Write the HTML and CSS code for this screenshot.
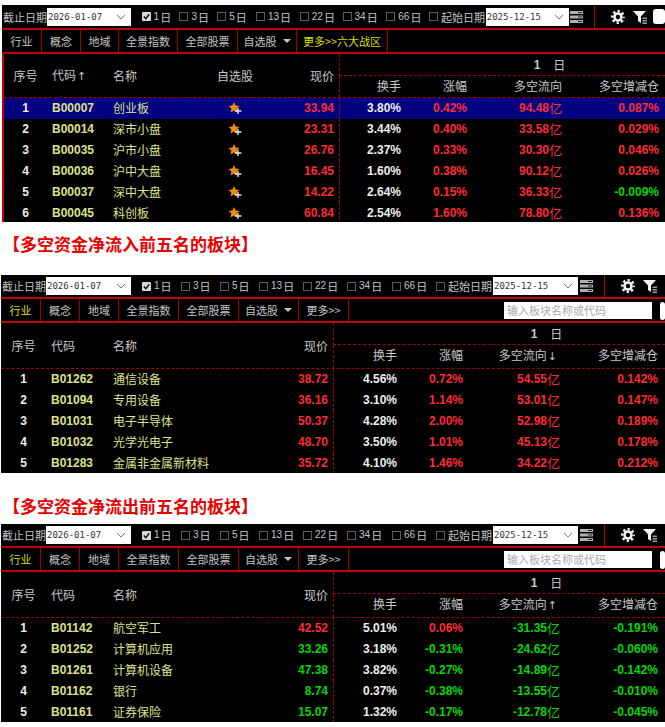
FILE: index.html
```html
<!DOCTYPE html>
<html lang="zh">
<head>
<meta charset="utf-8">
<title>多空资金</title>
<link rel="stylesheet" href="styles.css">
</head>
<body>
<svg class="defs" width="0" height="0" aria-hidden="true">
  <symbol id="star" viewBox="0 0 14 12">
    <path d="M6 0 7.600 3.500 11.600 3.900 8.600 6.500 9.500 10.400 6 8.400 2.500 10.400 3.400 6.500 0.400 3.900 4.400 3.500Z" fill="#f08a12"/>
    <path d="M9.300 6h1.400v2.300h2.700v1.400h-2.700V12H9.300V9.700H6.800V8.300h2.500Z" fill="#ece4d8"/>
  </symbol>
  <symbol id="gear" viewBox="0 0 14 14">
    <circle cx="7" cy="7" r="3.500" fill="none" stroke="#f2f2f2" stroke-width="2.600"/>
    <circle cx="7" cy="7" r="5.800" fill="none" stroke="#f2f2f2" stroke-width="2.400" stroke-dasharray="2.300 2.250" stroke-dashoffset="1.150"/>
  </symbol>
  <symbol id="filter" viewBox="0 0 14 14">
    <path d="M0 1h13L8 6.500V13L5 11V6.500Z" fill="#f2f2f2"/>
    <path d="M9.500 7.500H14V9H9.500ZM9.500 10H14v1.500H9.500ZM9.500 12.500H14V14H9.500Z" fill="#9a9a9a"/>
  </symbol>
  <symbol id="stack" viewBox="0 0 13 12">
    <path d="M0 0h13v3H0ZM0 4.500h13v3H0ZM0 9h13v3H0Z" fill="#b0b0b0"/>
    <path d="M8 1h4v1H8ZM8 5.500h4v1H8ZM8 10h4v1H8Z" fill="#222"/>
  </symbol>
  <symbol id="chev" viewBox="0 0 10 6">
    <path d="M1 1 5 5 9 1" fill="none" stroke="#777" stroke-width="1"/>
  </symbol>
  <symbol id="tick" viewBox="0 0 9 9">
    <rect width="9" height="9" rx="1" fill="#d8d8d8"/>
    <path d="M1.800 4.500 3.800 6.600 7.300 2.300" fill="none" stroke="#111" stroke-width="1.500"/>
  </symbol>
</svg>

<section class="panel panel-a">
  <div class="toolbar">
    <span class="tool-label">截止日期</span>
    <span class="date">2026-01-07<svg class="chev"><use href="#chev"/></svg></span>
    <span class="chk"><svg class="tick"><use href="#tick"/></svg><b>1</b>日</span>
    <span class="chk"><i class="box"></i><b>3</b>日</span>
    <span class="chk"><i class="box"></i><b>5</b>日</span>
    <span class="chk"><i class="box"></i><b>13</b>日</span>
    <span class="chk"><i class="box"></i><b>22</b>日</span>
    <span class="chk"><i class="box"></i><b>34</b>日</span>
    <span class="chk"><i class="box"></i><b>66</b>日</span>
    <span class="chk"><i class="box"></i>起始日期</span>
    <span class="date">2025-12-15<svg class="chev"><use href="#chev"/></svg></span>
    <span class="stack-cell"><svg class="stack"><use href="#stack"/></svg></span>
    <svg class="gear"><use href="#gear"/></svg>
    <svg class="filter"><use href="#filter"/></svg>
    <span class="white-btn"></span>
  </div>
  <div class="tabs">
    <span class="tab">行业</span>
    <span class="tab">概念</span>
    <span class="tab">地域</span>
    <span class="tab">全景指数</span>
    <span class="tab">全部股票</span>
    <span class="tab">自选股<i class="caret"></i></span>
    <span class="tab tab-on">更多&gt;&gt;六大战区</span>
  </div>
  <div class="table">
    <div class="head">
      <span class="h-no">序号</span>
      <span class="h-code">代码<em class="arrow">↑</em></span>
      <span class="h-name">名称</span>
      <span class="h-fav">自选股</span>
      <span class="h-price">现价</span>
      <span class="h-span"><b>1</b><span>日</span></span>
      <span class="h-turn">换手</span>
      <span class="h-chg">涨幅</span>
      <span class="h-flow">多空流向</span>
      <span class="h-pos">多空增减仓</span>
    </div>
    <div class="row row-sel"><span class="no">1</span><span class="code">B00007</span><span class="name">创业板</span><span class="fav"><svg class="star"><use href="#star"/></svg></span><span class="price up">33.94</span><span class="turn">3.80%</span><span class="chg up">0.42%</span><span class="flow up">94.48<i>亿</i></span><span class="pos up">0.087%</span></div>
    <div class="row"><span class="no">2</span><span class="code">B00014</span><span class="name">深市小盘</span><span class="fav"><svg class="star"><use href="#star"/></svg></span><span class="price up">23.31</span><span class="turn">3.44%</span><span class="chg up">0.40%</span><span class="flow up">33.58<i>亿</i></span><span class="pos up">0.029%</span></div>
    <div class="row"><span class="no">3</span><span class="code">B00035</span><span class="name">沪市小盘</span><span class="fav"><svg class="star"><use href="#star"/></svg></span><span class="price up">26.76</span><span class="turn">2.37%</span><span class="chg up">0.33%</span><span class="flow up">30.30<i>亿</i></span><span class="pos up">0.046%</span></div>
    <div class="row"><span class="no">4</span><span class="code">B00036</span><span class="name">沪中大盘</span><span class="fav"><svg class="star"><use href="#star"/></svg></span><span class="price up">16.45</span><span class="turn">1.60%</span><span class="chg up">0.38%</span><span class="flow up">90.12<i>亿</i></span><span class="pos up">0.026%</span></div>
    <div class="row"><span class="no">5</span><span class="code">B00037</span><span class="name">深中大盘</span><span class="fav"><svg class="star"><use href="#star"/></svg></span><span class="price up">14.22</span><span class="turn">2.64%</span><span class="chg up">0.15%</span><span class="flow up">36.33<i>亿</i></span><span class="pos down">-0.009%</span></div>
    <div class="row"><span class="no">6</span><span class="code">B00045</span><span class="name">科创板</span><span class="fav"><svg class="star"><use href="#star"/></svg></span><span class="price up">60.84</span><span class="turn">2.54%</span><span class="chg up">1.60%</span><span class="flow up">78.80<i>亿</i></span><span class="pos up">0.136%</span></div>
  </div>
</section>

<h2 class="title title-a">【多空资金净流入前五名的板块】</h2>

<section class="panel panel-b">
  <div class="toolbar">
    <span class="tool-label">截止日期</span>
    <span class="date">2026-01-07<svg class="chev"><use href="#chev"/></svg></span>
    <span class="chk"><svg class="tick"><use href="#tick"/></svg><b>1</b>日</span>
    <span class="chk"><i class="box"></i><b>3</b>日</span>
    <span class="chk"><i class="box"></i><b>5</b>日</span>
    <span class="chk"><i class="box"></i><b>13</b>日</span>
    <span class="chk"><i class="box"></i><b>22</b>日</span>
    <span class="chk"><i class="box"></i><b>34</b>日</span>
    <span class="chk"><i class="box"></i><b>66</b>日</span>
    <span class="chk"><i class="box"></i>起始日期</span>
    <span class="date">2025-12-15<svg class="chev"><use href="#chev"/></svg></span>
    <span class="stack-cell"><svg class="stack"><use href="#stack"/></svg></span>
    <svg class="gear"><use href="#gear"/></svg>
    <svg class="filter"><use href="#filter"/></svg>
  </div>
  <div class="tabs">
    <span class="tab tab-on">行业</span>
    <span class="tab">概念</span>
    <span class="tab">地域</span>
    <span class="tab">全景指数</span>
    <span class="tab">全部股票</span>
    <span class="tab">自选股<i class="caret"></i></span>
    <span class="tab">更多&gt;&gt;</span>
    <span class="tab-fill"></span>
    <span class="search">输入板块名称或代码</span>
    <span class="tab-fill"></span>
    <span class="white-btn"></span>
  </div>
  <div class="table">
    <div class="head">
      <span class="h-no">序号</span>
      <span class="h-code">代码</span>
      <span class="h-name">名称</span>
      <span class="h-price">现价</span>
      <span class="h-span"><b>1</b><span>日</span></span>
      <span class="h-turn">换手</span>
      <span class="h-chg">涨幅</span>
      <span class="h-flow">多空流向<em class="arrow">↓</em></span>
      <span class="h-pos">多空增减仓</span>
    </div>
    <div class="row"><span class="no">1</span><span class="code">B01262</span><span class="name">通信设备</span><span class="price up">38.72</span><span class="turn">4.56%</span><span class="chg up">0.72%</span><span class="flow up">54.55<i>亿</i></span><span class="pos up">0.142%</span></div>
    <div class="row"><span class="no">2</span><span class="code">B01094</span><span class="name">专用设备</span><span class="price up">36.16</span><span class="turn">3.10%</span><span class="chg up">1.14%</span><span class="flow up">53.01<i>亿</i></span><span class="pos up">0.147%</span></div>
    <div class="row"><span class="no">3</span><span class="code">B01031</span><span class="name">电子半导体</span><span class="price up">50.37</span><span class="turn">4.28%</span><span class="chg up">2.00%</span><span class="flow up">52.98<i>亿</i></span><span class="pos up">0.189%</span></div>
    <div class="row"><span class="no">4</span><span class="code">B01032</span><span class="name">光学光电子</span><span class="price up">48.70</span><span class="turn">3.50%</span><span class="chg up">1.01%</span><span class="flow up">45.13<i>亿</i></span><span class="pos up">0.178%</span></div>
    <div class="row"><span class="no">5</span><span class="code">B01283</span><span class="name">金属非金属新材料</span><span class="price up">35.72</span><span class="turn">4.10%</span><span class="chg up">1.46%</span><span class="flow up">34.22<i>亿</i></span><span class="pos up">0.212%</span></div>
  </div>
</section>

<h2 class="title title-b">【多空资金净流出前五名的板块】</h2>

<section class="panel panel-b">
  <div class="toolbar">
    <span class="tool-label">截止日期</span>
    <span class="date">2026-01-07<svg class="chev"><use href="#chev"/></svg></span>
    <span class="chk"><svg class="tick"><use href="#tick"/></svg><b>1</b>日</span>
    <span class="chk"><i class="box"></i><b>3</b>日</span>
    <span class="chk"><i class="box"></i><b>5</b>日</span>
    <span class="chk"><i class="box"></i><b>13</b>日</span>
    <span class="chk"><i class="box"></i><b>22</b>日</span>
    <span class="chk"><i class="box"></i><b>34</b>日</span>
    <span class="chk"><i class="box"></i><b>66</b>日</span>
    <span class="chk"><i class="box"></i>起始日期</span>
    <span class="date">2025-12-15<svg class="chev"><use href="#chev"/></svg></span>
    <span class="stack-cell"><svg class="stack"><use href="#stack"/></svg></span>
    <svg class="gear"><use href="#gear"/></svg>
    <svg class="filter"><use href="#filter"/></svg>
  </div>
  <div class="tabs">
    <span class="tab tab-on">行业</span>
    <span class="tab">概念</span>
    <span class="tab">地域</span>
    <span class="tab">全景指数</span>
    <span class="tab">全部股票</span>
    <span class="tab">自选股<i class="caret"></i></span>
    <span class="tab">更多&gt;&gt;</span>
    <span class="tab-fill"></span>
    <span class="search">输入板块名称或代码</span>
    <span class="tab-fill"></span>
    <span class="white-btn"></span>
  </div>
  <div class="table">
    <div class="head">
      <span class="h-no">序号</span>
      <span class="h-code">代码</span>
      <span class="h-name">名称</span>
      <span class="h-price">现价</span>
      <span class="h-span"><b>1</b><span>日</span></span>
      <span class="h-turn">换手</span>
      <span class="h-chg">涨幅</span>
      <span class="h-flow">多空流向<em class="arrow">↑</em></span>
      <span class="h-pos">多空增减仓</span>
    </div>
    <div class="row"><span class="no">1</span><span class="code">B01142</span><span class="name">航空军工</span><span class="price up">42.52</span><span class="turn">5.01%</span><span class="chg up">0.06%</span><span class="flow down">-31.35<i>亿</i></span><span class="pos down">-0.191%</span></div>
    <div class="row"><span class="no">2</span><span class="code">B01252</span><span class="name">计算机应用</span><span class="price down">33.26</span><span class="turn">3.18%</span><span class="chg down">-0.31%</span><span class="flow down">-24.62<i>亿</i></span><span class="pos down">-0.060%</span></div>
    <div class="row"><span class="no">3</span><span class="code">B01261</span><span class="name">计算机设备</span><span class="price down">47.38</span><span class="turn">3.82%</span><span class="chg down">-0.27%</span><span class="flow down">-14.89<i>亿</i></span><span class="pos down">-0.142%</span></div>
    <div class="row"><span class="no">4</span><span class="code">B01162</span><span class="name">银行</span><span class="price down">8.74</span><span class="turn">0.37%</span><span class="chg down">-0.38%</span><span class="flow down">-13.55<i>亿</i></span><span class="pos down">-0.010%</span></div>
    <div class="row"><span class="no">5</span><span class="code">B01161</span><span class="name">证券保险</span><span class="price down">15.07</span><span class="turn">1.32%</span><span class="chg down">-0.17%</span><span class="flow down">-12.78<i>亿</i></span><span class="pos down">-0.045%</span></div>
  </div>
</section>
</body>
</html>
```
FILE: styles.css
```css
* { box-sizing: border-box; }
html, body { margin: 0; padding: 0; background: #fff; }
body {
  width: 665px;
  height: 727px;
  overflow: hidden;
  padding-top: 5px;
  font-family: "Noto Sans CJK SC", "Liberation Sans", sans-serif;
  font-size: 12px;
  color: #c8c8c8;
}
.defs { position: absolute; }
.panel { background: #000; overflow: hidden; }
.panel-a {
  margin-left: 2px;
  height: 217px;
  --cols: 43px 66px 97px 50px 79px 62px 66px 95px 97px 1fr;
  --tabs: 40px 39px 38px 59px 60px 59px 91px;
}
.panel-b {
  margin-left: 1px;
  height: 198px;
  --cols: 45px 67px 157px 63px 64px 66px 97px 98px 1fr;
  --tabs: 40px 39px 39px 60px 60px 60px 50px 155px 148px 8px 1fr;
}

/* toolbar */
.toolbar {
  display: flex;
  align-items: center;
  height: 24px;
  border-bottom: 2px solid #c00000;
  font-size: 11px;
  line-height: 14px;
  color: #c4c4c4;
}
.panel-a .toolbar { height: 25px; }
.tool-label { width: 45px; padding-left: 1px; white-space: nowrap; }
.date {
  width: 84px;
  height: 18px;
  display: flex;
  align-items: center;
  justify-content: space-between;
  padding: 0 5px 0 1px;
  background: #fff;
  color: #333;
  font-family: "DejaVu Sans Mono", monospace;
  font-size: 9px;
}
.panel-b .date { width: 85px; }
.toolbar .date:nth-child(2) { margin-right: 11px; }
.chev { width: 10px; height: 6px; }
.chk { display: flex; align-items: center; white-space: nowrap; width: 38px; }
.chk b { font-family: "Liberation Sans", sans-serif; font-weight: 400; font-size: 10px; margin-right: 1px; }
.box { width: 9px; height: 9px; border: 1px solid #5c5c5c; margin-right: 3px; flex: none; }
.tick { width: 9px; height: 9px; margin-right: 3px; flex: none; }
.chk:nth-child(5) { width: 39px; }
.chk:nth-child(6) { width: 44px; }
.chk:nth-child(7) { width: 43px; }
.chk:nth-child(8) { width: 44px; }
.chk:nth-child(9) { width: 43px; }
.chk:nth-child(10) { width: 57px; }
.panel-b .chk { width: 39px; }
.panel-b .chk:nth-child(6) { width: 44px; }
.panel-b .chk:nth-child(7) { width: 44px; }
.panel-b .chk:nth-child(8) { width: 45px; }
.panel-b .chk:nth-child(9) { width: 44px; }
.panel-b .chk:nth-child(10) { width: 57px; }
.stack-cell {
  width: 26px;
  height: 100%;
  display: flex;
  align-items: center;
  padding-left: 1px;
  border-right: 1px solid #c00000;
}
.panel-b .stack-cell { width: 27px; padding-left: 2px; }
.stack { width: 13px; height: 12px; }
.gear { width: 14px; height: 14px; margin-left: 16px; }
.filter { width: 14px; height: 14px; margin-left: 8px; }
.white-btn { display: block; background: #fff; border-radius: 3px; }
.toolbar .white-btn { width: 12px; height: 15px; margin-left: 6px; }

/* tabs */
.tabs {
  display: grid;
  grid-template-columns: var(--tabs);
  height: 24px;
  border-bottom: 2px solid #c00000;
  font-size: 11px;
  line-height: 22px;
  align-items: stretch;
}
.tab {
  display: flex;
  align-items: center;
  justify-content: center;
  white-space: nowrap;
  color: #c4c4c4;
  border-right: 1px solid #a00000;
}
.tab-on { color: #dcdc00; }
.caret {
  width: 0;
  height: 0;
  margin-left: 6px;
  border-left: 4px solid transparent;
  border-right: 4px solid transparent;
  border-top: 4px solid #c4c4c4;
}
.tab-fill { display: block; }
.search {
  margin: 3px 0 1px;
  height: 17px;
  line-height: 17px;
  padding-left: 3px;
  background: #fff;
  color: #aaa;
  font-size: 11px;
  white-space: nowrap;
}
.tabs .white-btn { margin: 3px 0 1px; }

/* table */
.panel-a .table { border-left: 2px solid #c00000; }
.head {
  display: grid;
  grid-template-columns: var(--cols);
  grid-template-rows: 22px 21px;
  border-bottom: 1px dashed #a00000;
  line-height: 20px;
}
.panel-b .head { grid-template-rows: 22px 23px; }
.head > span { white-space: nowrap; }
.h-no, .h-code, .h-name, .h-fav, .h-price {
  grid-row: 1 / span 2;
  align-self: center;
}
.h-no { text-align: center; }
.h-code { padding-left: 5px; }
.h-fav { text-align: center; }
.h-price { text-align: right; padding-right: 5px; }
.panel-a .h-price { grid-column: 5; }
.panel-b .h-price { grid-column: 4; }
.h-span {
  grid-column: 6 / -1;
  display: flex;
  justify-content: center;
  align-items: center;
  gap: 13px;
  padding-left: 94px;
  border-left: 1px dashed #a00000;
  border-bottom: 1px dashed #a00000;
}
.panel-b .h-span { grid-column: 5 / -1; }
.h-span b { font-family: "Liberation Sans", sans-serif; font-size: 12px; }
.h-turn { border-left: 1px dashed #a00000; }
.h-turn, .h-chg, .h-flow, .h-pos { text-align: right; align-self: stretch; }
.panel-b .h-flow { padding-right: 3px; }
.arrow { font-family: "DejaVu Sans", sans-serif; font-style: normal; font-size: 11px; margin-left: 1px; }

.row {
  display: grid;
  grid-template-columns: var(--cols);
  height: 21px;
  line-height: 21px;
  font-family: "Liberation Sans", "Noto Sans CJK SC", sans-serif;
  font-size: 12px;
  font-weight: 700;
  white-space: nowrap;
}
.row-sel { background: #000080; }
.no { text-align: center; color: #eee; }
.code { padding-left: 5px; color: #dfe08a; }
.name { font-family: "Noto Sans CJK SC", sans-serif; font-weight: 400; line-height: 19px; color: #dfe08a; }
.fav { display: flex; align-items: center; justify-content: center; }
.star { width: 14px; height: 12px; margin-bottom: 1px; }
.price { text-align: right; padding-right: 5px; }
.turn { text-align: right; color: #eee; border-left: 1px dashed #a00000; }
.chg, .pos { text-align: right; }
.flow { display: flex; justify-content: flex-end; }
.flow i { font-family: "Noto Sans CJK SC", sans-serif; font-style: normal; font-weight: 400; font-size: 13px; line-height: 19px; }
.up { color: #ff2a35; }
.down { color: #00d800; }

/* section titles */
.title {
  margin: 0;
  color: #e80000;
  font-size: 17px;
  font-weight: 700;
  white-space: nowrap;
  display: flex;
  align-items: center;
  padding-left: 3px;
}
.title-a { height: 53px; padding-bottom: 10px; }
.title-b { height: 51px; padding-top: 13px; }
```
